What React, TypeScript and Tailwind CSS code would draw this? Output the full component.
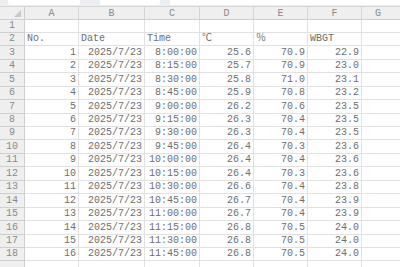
import React from 'react';

type Row = { no: number; time: string; t: string; h: string; w: string };

const readings: [string, string, string][] = [
  ['25.6', '70.9', '22.9'],
  ['25.7', '70.9', '23.0'],
  ['25.8', '71.0', '23.1'],
  ['25.9', '70.8', '23.2'],
  ['26.2', '70.6', '23.5'],
  ['26.3', '70.4', '23.5'],
  ['26.3', '70.4', '23.5'],
  ['26.4', '70.3', '23.6'],
  ['26.4', '70.4', '23.6'],
  ['26.4', '70.3', '23.6'],
  ['26.6', '70.4', '23.8'],
  ['26.7', '70.4', '23.9'],
  ['26.7', '70.4', '23.9'],
  ['26.8', '70.5', '24.0'],
  ['26.8', '70.5', '24.0'],
  ['26.8', '70.5', '24.0'],
];

const rows: Row[] = readings.map(([t, h, w], i) => {
  const mins = 8 * 60 + i * 15;
  const hh = Math.floor(mins / 60);
  const mm = String(mins % 60).padStart(2, '0');
  return { no: i + 1, time: `${hh}:${mm}:00`, t, h, w };
});

// column widths in px: row header, A..F, G fills the rest
const cols = ['w-[25px]', 'w-[54px]', 'w-[66px]', 'w-[55px]', 'w-[54px]', 'w-[54px]', 'w-[54px]'];
const letters = ['A', 'B', 'C', 'D', 'E', 'F'];

const rowHeight = (i: number) => {
  // rows start at y=20 and are ~13.44px tall
  const a = Math.floor(i * 13.44);
  const b = Math.floor((i + 1) * 13.44);
  return b - a === 14 ? 'h-[14px]' : 'h-[13px]';
};

const cell = 'shrink-0 border-r border-b border-[#e1e1e1] flex items-end pb-[1px] overflow-hidden whitespace-nowrap';
const rowHead =
  'w-[25px] shrink-0 border-r border-b border-[#cfcfcf] bg-[#efefef] text-[#8a8a8a] flex items-end justify-center pb-[1px]';

const Cell: React.FC<{ w: string; right?: boolean; children?: React.ReactNode }> = ({ w, right, children }) => (
  <div className={`${cell} ${w} ${right ? 'justify-end pr-[2px]' : 'justify-start pl-[2px]'}`}>{children}</div>
);

const App: React.FC = () => {
  const header = ['No.', 'Date', 'Time', '℃', '％', 'WBGT'];

  return (
    <div
      className="w-[400px] h-[267px] overflow-hidden bg-white text-[10px] leading-[11px] text-[#6e6e6e]"
      style={{ fontFamily: '"Liberation Mono", "Noto Sans CJK JP", monospace' }}
    >
      {/* formula bar remnants */}
      <div className="h-[7px] flex items-start bg-[#eceef1] border-b border-[#d6d6d6]">
        <div className="ml-[8px] w-[72px] h-[5px] bg-white rounded-b-[2px]" />
        <div className="ml-[20px] w-[60px] h-[5px] bg-white rounded-b-[2px]" />
        <div className="ml-[10px] flex-1 h-[5px] bg-white" />
      </div>

      {/* column letters */}
      <div className="flex h-[13px] bg-[#efefef] border-b border-[#cfcfcf]">
        <div className="w-[25px] shrink-0 border-r border-[#cfcfcf] relative">
          <div className="absolute right-[3px] bottom-[2px] w-0 h-0 border-l-[7px] border-l-transparent border-b-[7px] border-b-[#c8c8c8]" />
        </div>
        {letters.map((l, i) => (
          <div
            key={l}
            className={`${cols[i + 1]} shrink-0 border-r border-[#d6d6d6] flex items-center justify-center text-[#8a8a8a]`}
          >
            {l}
          </div>
        ))}
        <div className="flex-1 flex items-center justify-center text-[#8a8a8a] pr-[6px]">G</div>
      </div>

      {/* row 1 */}
      <div className={`flex ${rowHeight(0)}`}>
        <div className={rowHead}>1</div>
        {cols.slice(1).map((w, i) => (
          <Cell key={i} w={w} />
        ))}
        <div className="flex-1 border-b border-[#e1e1e1]" />
      </div>

      {/* row 2: headings */}
      <div className={`flex ${rowHeight(1)}`}>
        <div className={rowHead}>2</div>
        {header.map((h, i) => (
          <Cell key={h} w={cols[i + 1]}>
            {h}
          </Cell>
        ))}
        <div className="flex-1 border-b border-[#e1e1e1]" />
      </div>

      {rows.map((r, i) => (
        <div key={r.no} className={`flex ${rowHeight(i + 2)}`}>
          <div className={rowHead}>{i + 3}</div>
          <Cell w={cols[1]} right>
            {r.no}
          </Cell>
          <Cell w={cols[2]} right>
            2025/7/23
          </Cell>
          <Cell w={cols[3]} right>
            {r.time}
          </Cell>
          <Cell w={cols[4]} right>
            {r.t}
          </Cell>
          <Cell w={cols[5]} right>
            {r.h}
          </Cell>
          <Cell w={cols[6]} right>
            {r.w}
          </Cell>
          <div className="flex-1 border-b border-[#e1e1e1]" />
        </div>
      ))}

      {/* next row, cut off by the window */}
      <div className="flex h-[13px]">
        <div className={rowHead} />
        {cols.slice(1).map((w, i) => (
          <Cell key={i} w={w} />
        ))}
      </div>
    </div>
  );
};

export default App;
